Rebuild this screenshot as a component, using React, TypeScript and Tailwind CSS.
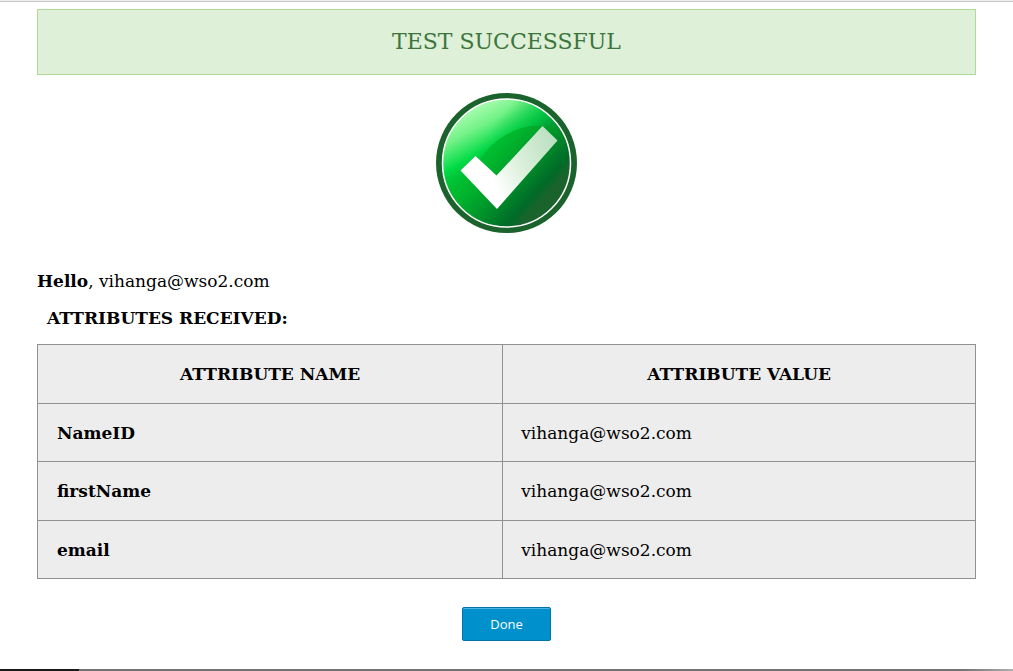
const attributes = [
  { name: "NameID", value: "vihanga@wso2.com", height: "h-[58px]" },
  { name: "firstName", value: "vihanga@wso2.com", height: "h-[59px]" },
  { name: "email", value: "vihanga@wso2.com", height: "h-[58px]" },
];

function SuccessIcon() {
  return (
    <svg viewBox="0 0 141 140" className="h-[140px] w-[141px]" role="img" aria-label="Success">
      <defs>
        <linearGradient id="base" gradientUnits="userSpaceOnUse" x1="26" y1="52" x2="102" y2="120">
          <stop offset="0" stopColor="#00cf3a" />
          <stop offset="0.32" stopColor="#00b62d" />
          <stop offset="0.55" stopColor="#009a2b" />
          <stop offset="0.85" stopColor="#006b27" />
          <stop offset="0.95" stopColor="#1b632d" />
        </linearGradient>
        <linearGradient id="gloss" gradientUnits="userSpaceOnUse" x1="36" y1="10" x2="74" y2="80">
          <stop offset="0" stopColor="#b4ffb8" />
          <stop offset="0.3" stopColor="#74f288" />
          <stop offset="0.6" stopColor="#00dc46" />
          <stop offset="0.8" stopColor="#00c034" stopOpacity="0" />
        </linearGradient>
        <linearGradient id="shade" gradientUnits="userSpaceOnUse" x1="72" y1="14" x2="117" y2="50">
          <stop offset="0" stopColor="#00c040" stopOpacity="0" />
          <stop offset="0.5" stopColor="#00b63e" stopOpacity="0.6" />
          <stop offset="1" stopColor="#008430" />
        </linearGradient>
        <linearGradient id="tick" gradientUnits="userSpaceOnUse" x1="54" y1="82" x2="118" y2="50">
          <stop offset="0" stopColor="#ffffff" />
          <stop offset="0.45" stopColor="#dcefdc" />
          <stop offset="1" stopColor="#bce1c2" />
        </linearGradient>
        <clipPath id="disc">
          <circle cx="70.5" cy="70" r="64" />
        </clipPath>
      </defs>
      <ellipse cx="70.5" cy="70" rx="70.5" ry="70" fill="#1b632d" />
      <circle cx="70.5" cy="70" r="64" fill="url(#base)" />
      <g clipPath="url(#disc)">
        <path d="M0 0H141V45C122 30 96 28 73 40C60 47 50 56 43 68L20 92L0 100Z" fill="url(#gloss)" />
        <path d="M0 0H141V45C122 30 96 28 73 40C60 47 50 56 43 68L20 92L0 100Z" fill="url(#shade)" />
      </g>
      <circle cx="70.5" cy="70" r="64" fill="none" stroke="#fff" strokeWidth="1.5" />
      <path d="M24.500 77.500L39.500 63L60.500 82.500L106.500 33L121.500 47.500L61 116Z" fill="url(#tick)" />
    </svg>
  );
}

export default function App() {
  return (
    <div className="flex min-h-screen flex-col bg-white font-['DejaVu_Serif','Liberation_Serif',serif] text-[17px] leading-5 text-black">
      <div className="h-0.5 border-b border-[#c5c5c5] bg-[#eeeeee]" />
      <main className="mx-[37px] mt-[7px] flex flex-col">
        <h1 className="border border-[#aedb9a] bg-[#dff0d8] py-[19px] text-center text-[22px] leading-[26px] text-[#3c763d]">
          TEST SUCCESSFUL
        </h1>
        <div className="mt-[18px] flex justify-center">
          <SuccessIcon />
        </div>
        <p className="mt-[38px]">
          <b>Hello</b>, vihanga@wso2.com
        </p>
        <h2 className="mt-[17px] ml-2.5 font-bold">ATTRIBUTES RECEIVED:</h2>
        <table className="mt-4 w-full border-collapse border border-[#919191] bg-[#ededed]">
          <thead>
            <tr className="h-[59px]">
              <th className="w-[49.6%] border border-[#919191] px-[19px]">ATTRIBUTE NAME</th>
              <th className="border border-[#919191] px-[18px]">ATTRIBUTE VALUE</th>
            </tr>
          </thead>
          <tbody>
            {attributes.map((attribute) => (
              <tr key={attribute.name} className={attribute.height}>
                <th scope="row" className="border border-[#919191] px-[19px] text-left">
                  {attribute.name}
                </th>
                <td className="border border-[#919191] px-[18px]">{attribute.value}</td>
              </tr>
            ))}
          </tbody>
        </table>
        <button
          type="button"
          className="mt-7 mb-7 h-[34px] self-center rounded-xs border border-[#0073aa] bg-[#0091cd] px-[27px] font-['Open_Sans','Noto_Sans',sans-serif] text-[13px] text-white inset-shadow-[0_1px_0_#4eb3de]"
        >
          Done
        </button>
      </main>
      <div className="mt-auto flex h-0.5 bg-linear-to-r from-[#737373] from-95% to-[#b0b0b0]">
        <div className="w-[79px] bg-[#191919]" />
      </div>
    </div>
  );
}
